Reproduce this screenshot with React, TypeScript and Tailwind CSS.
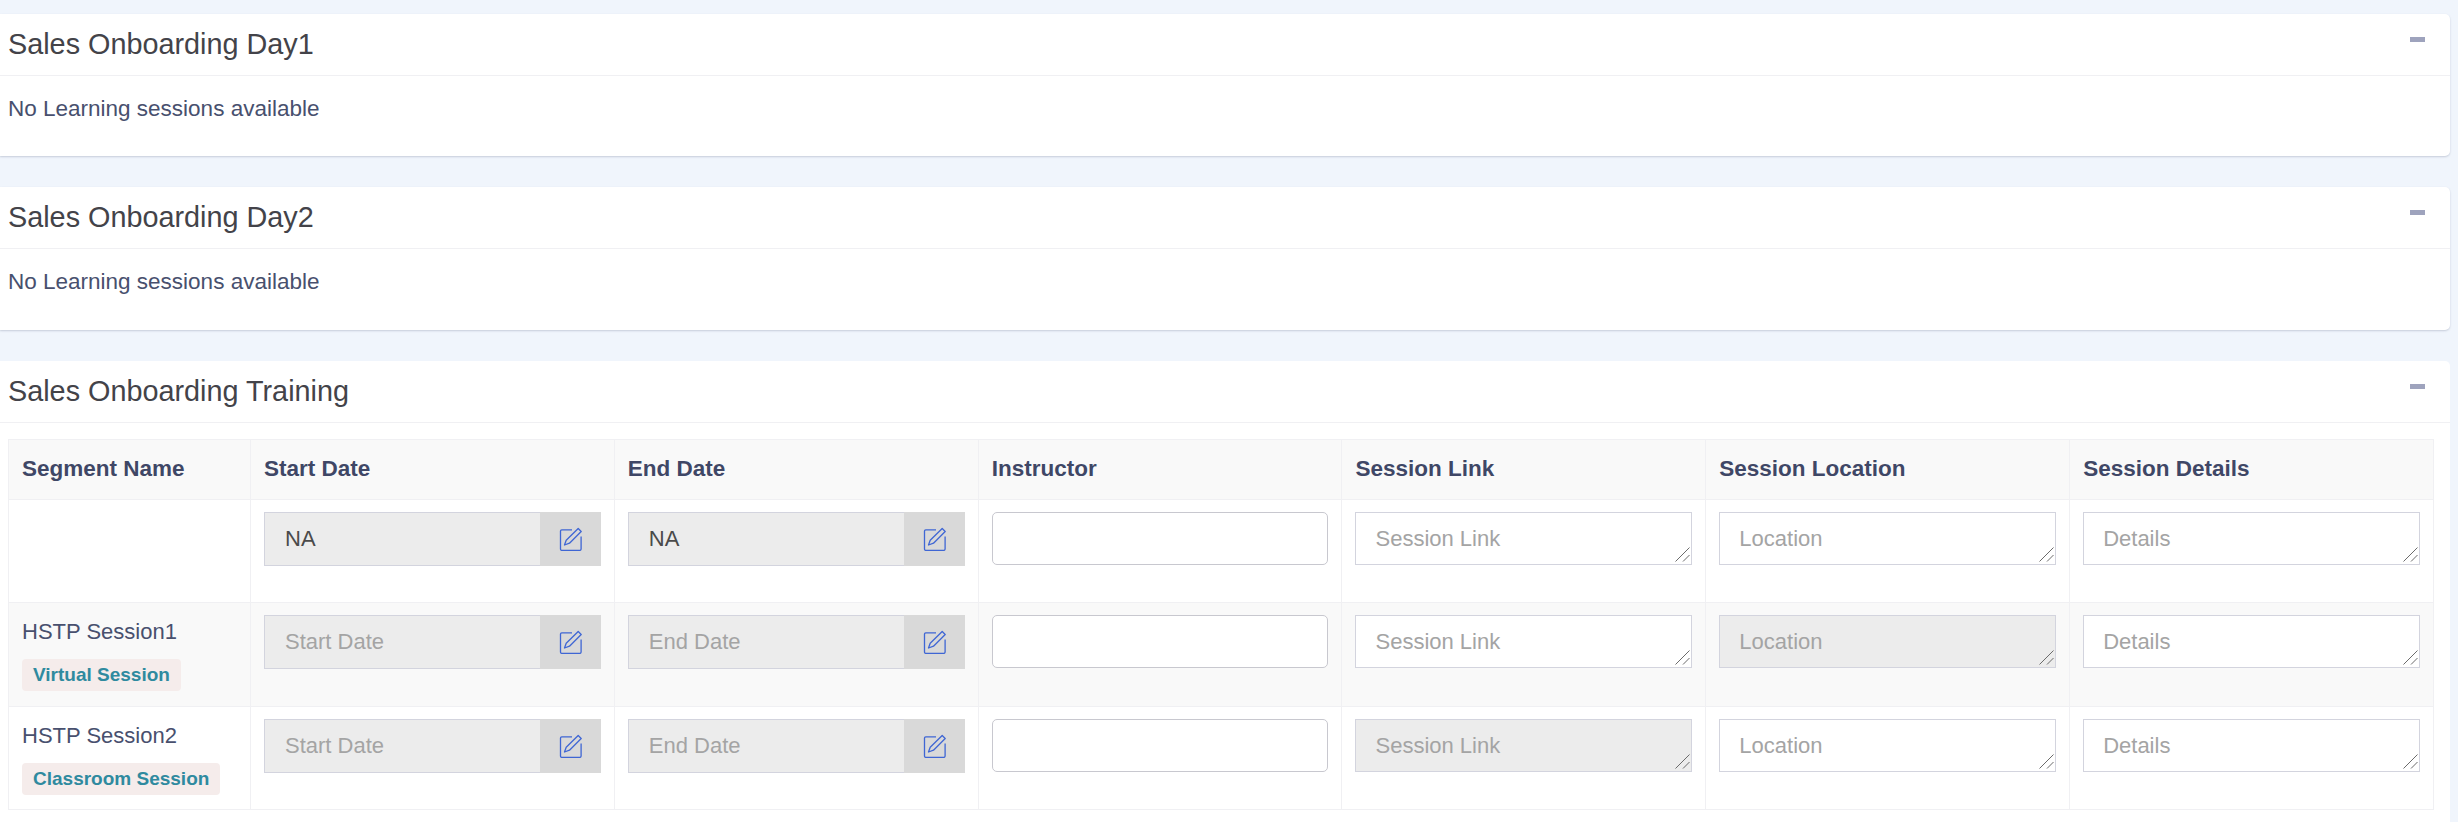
const FONT = "font-['Liberation_Sans',Arial,sans-serif]";

function EditIcon() {
  return (
    <svg className="mr-[1px]" width="24" height="24" viewBox="0 0 24 24" fill="none" stroke="#3f66d4" strokeWidth="1.3" strokeLinejoin="round">
      <path d="M14 2.8H3.8a1.3 1.3 0 0 0-1.3 1.3v18a1.3 1.3 0 0 0 1.3 1.3h18a1.3 1.3 0 0 0 1.3-1.3V9.5" />
      <path d="M20.2 1.5l3 3L11.5 16.2l-5 1.8 1.7-4.8z" />
    </svg>
  );
}

function DateField({ placeholder, value }: { placeholder: string; value?: string }) {
  return (
    <div className="flex h-[54px]">
      <input
        disabled
        value={value}
        placeholder={placeholder}
        className="w-[276px] h-full border border-[#d3d4de] border-r-0 bg-[#ececec] pl-5 text-[22px] text-[#4a4a4a] placeholder:text-[#a4a4a4] outline-none"
      />
      <span className="flex flex-1 items-center justify-center bg-[#d9d9d9]">
        <EditIcon />
      </span>
    </div>
  );
}

function TextArea({ placeholder, disabled }: { placeholder: string; disabled?: boolean }) {
  return (
    <div className="relative">
      <textarea
        disabled={disabled}
        placeholder={placeholder}
        className={`block w-full h-[53px] resize-none border border-[#d3d4de] px-[19px] pt-[12px] text-[22px] leading-[28px] placeholder:text-[#a4a4a4] outline-none ${disabled ? 'bg-[#ececec]' : 'bg-white'}`}
      />
      <svg className="absolute right-[2px] bottom-[3px]" width="15" height="15" viewBox="0 0 15 15" stroke="#6b6b6b" strokeWidth="1">
        <path d="M0.5 14.5L14.5 0.5M8 14.5L14.5 8" />
      </svg>
    </div>
  );
}

function Badge({ children }: { children: string }) {
  return (
    <span className="inline-block h-[32px] rounded-[4px] bg-[#f5eceb] px-[11px] text-[19px] leading-[32px] font-bold text-[#2f8a9f]">
      {children}
    </span>
  );
}

function CardHeader({ title }: { title: string }) {
  return (
    <header className="flex h-[62px] items-center justify-between border-b border-[#f0f0f3] pl-2 pr-[25px]">
      <h3 className="text-[28.8px] font-normal text-[#434349]">{title}</h3>
      <span className="mb-[10px] h-[5px] w-[15px] bg-[#9ea3bd]" />
    </header>
  );
}

function EmptyCard({ title }: { title: string }) {
  return (
    <section className="mr-2 mb-[31px] rounded-r-[5px] bg-white shadow-[0_1px_2px_rgba(100,110,140,0.3)]">
      <CardHeader title={title} />
      <p className="h-[80.4px] pl-2 pt-[19px] text-[22.5px] leading-[28px] text-[#48506e]">No Learning sessions available</p>
    </section>
  );
}

const cell = 'border border-[#f0f0f3] px-[13px] pt-[12px] align-top';
const head = 'border border-[#f0f0f3] px-[13px] text-left text-[22.5px] font-bold text-[#3f4766]';

const rows = [
  { name: '', badge: '', start: 'NA', end: 'NA', linkOff: false, locOff: false },
  { name: 'HSTP Session1', badge: 'Virtual Session', linkOff: false, locOff: true },
  { name: 'HSTP Session2', badge: 'Classroom Session', linkOff: true, locOff: false },
];

export default function App() {
  return (
    <div className={`min-h-[822px] bg-[#f0f5fc] pt-[14px] ${FONT}`}>
      <EmptyCard title="Sales Onboarding Day1" />
      <EmptyCard title="Sales Onboarding Day2" />
      <section className="mr-2 h-[461px] rounded-tr-[5px] bg-white">
        <CardHeader title="Sales Onboarding Training" />
        <div className="pl-2 pr-4 pt-4">
          <table className="w-[2425px] table-fixed border-collapse">
            <colgroup>
              <col className="w-[242px]" />
              <col className="w-[363.83px]" span={6} />
            </colgroup>
            <thead>
              <tr className="h-[60px] bg-[#f9f9f9]">
                {['Segment Name', 'Start Date', 'End Date', 'Instructor', 'Session Link', 'Session Location', 'Session Details'].map(h => (
                  <th key={h} className={head}>{h}</th>
                ))}
              </tr>
            </thead>
            <tbody>
              {rows.map((r, i) => (
                <tr key={i} className={`h-[103.4px] ${i === 1 ? 'bg-[#f9f9f9]' : 'bg-white'}`}>
                  <td className={`${cell} text-[22px] leading-[28px] text-[#48506e]`}>
                    {r.name && <div className="mt-[3px]">{r.name}</div>}
                    {r.badge && <div className="mt-[13px]"><Badge>{r.badge}</Badge></div>}
                  </td>
                  <td className={cell}><DateField placeholder="Start Date" value={r.start} /></td>
                  <td className={cell}><DateField placeholder="End Date" value={r.end} /></td>
                  <td className={cell}>
                    <input className="block h-[53px] w-full rounded-[5px] border border-[#c8c8cf] bg-white outline-none" />
                  </td>
                  <td className={cell}><TextArea placeholder="Session Link" disabled={r.linkOff} /></td>
                  <td className={cell}><TextArea placeholder="Location" disabled={r.locOff} /></td>
                  <td className={cell}><TextArea placeholder="Details" /></td>
                </tr>
              ))}
            </tbody>
          </table>
        </div>
      </section>
    </div>
  );
}
